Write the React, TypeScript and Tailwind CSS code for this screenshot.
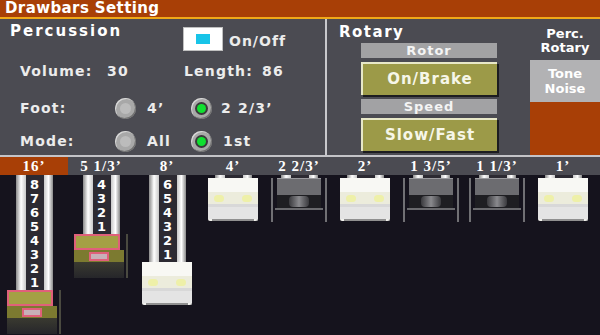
import React from "react";

// ─── Drawbar data ─────────────────────────────────────────────────────────────
type Kind = "brown" | "white" | "black";

const BARS: { label: string; level: number; kind: Kind }[] = [
  { label: "16’", level: 8, kind: "brown" },
  { label: "5 1/3’", level: 4, kind: "brown" },
  { label: "8’", level: 6, kind: "white" },
  { label: "4’", level: 0, kind: "white" },
  { label: "2 2/3’", level: 0, kind: "black" },
  { label: "2’", level: 0, kind: "white" },
  { label: "1 3/5’", level: 0, kind: "black" },
  { label: "1 1/3’", level: 0, kind: "black" },
  { label: "1’", level: 0, kind: "white" },
];

const UI = "font-['DejaVu_Sans',sans-serif] font-bold";

// ─── Small pieces ─────────────────────────────────────────────────────────────

function Radio({ on }: { on?: boolean }) {
  return (
    <div className="flex h-[21px] w-[21px] items-center justify-center rounded-full bg-[#a8a8a8] shadow-[inset_-1px_-1px_0_#707070,inset_1px_1px_0_#d8d8d8]">
      {on ? (
        <div className="flex h-[13px] w-[13px] items-center justify-center rounded-full bg-[#3a3a3a]">
          <div className="h-[9px] w-[9px] rounded-full bg-[#10e030]" />
        </div>
      ) : (
        <div className="h-[11px] w-[11px] rounded-full bg-[#bcbcbc]" />
      )}
    </div>
  );
}

function Knob({ kind }: { kind: Kind }) {
  if (kind === "white") {
    return (
      <div className="flex w-[50px] flex-col rounded-[2px] bg-[#f2f2ee] shadow-[inset_-1px_0_0_#b8b8b8]">
        <div className="h-[14px] bg-[#f8f8f4]" />
        <div className="flex h-[12px] items-center justify-between bg-[#ececdc] px-[6px]">
          <div className="h-[7px] w-[10px] rounded-sm bg-[#eef0a8]" />
          <div className="h-[7px] w-[10px] rounded-sm bg-[#eef0a8]" />
        </div>
        <div className="h-[3px] bg-[#d8d8d8]" />
        <div className="h-[12px] bg-[#e4e4e4]" />
        <div className="mx-[4px] h-[2px] bg-[#909090]" />
      </div>
    );
  }
  if (kind === "black") {
    return (
      <div className="flex w-[56px] flex-col items-center border-x-2 border-[#707074] pb-[12px]">
        <div className="h-[17px] w-[44px] bg-[#6c6c70] shadow-[inset_0_1px_0_#9a9a9e]" />
        <div className="flex h-[13px] w-[44px] items-center justify-center bg-[#1e1e22]">
          <div className="h-[11px] w-[20px] rounded-sm bg-gradient-to-r from-[#3a3a3e] via-[#8a8a8e] to-[#3a3a3e]" />
        </div>
        <div className="h-[2px] w-[48px] bg-[#6a6a6e]" />
      </div>
    );
  }
  return (
    <div className="flex w-[54px] flex-col items-start border-r-2 border-[#4a4a40]">
      <div className="h-[16px] w-[46px] border-2 border-[#e0607a] bg-[#a4a044]" />
      <div className="flex h-[12px] w-[50px] items-center justify-center bg-[#7c7a30]">
        <div className="h-[9px] w-[20px] border-2 border-[#e0607a] bg-[#c8b0b8]" />
      </div>
      <div className="h-[16px] w-[50px] bg-gradient-to-b from-[#3a3a30] to-[#26262a]" />
    </div>
  );
}

function Drawbar({ level, kind }: { level: number; kind: Kind }) {
  const nums = Array.from({ length: level }, (_, i) => level - i);
  return (
    <div className="flex flex-col items-center">
      <div className="flex">
        <div className="w-[10px] bg-gradient-to-r from-[#8a8a8a] via-[#ffffff] to-[#c8c8c8]" />
        <div className="flex w-[18px] flex-col bg-[#2c2a32] pt-[3px]">
          {nums.map((n) => (
            <div
              key={n}
              className={`${UI} h-[14px] text-center text-[13px] leading-[14px] text-white`}
            >
              {n}
            </div>
          ))}
        </div>
        <div className="w-[9px] bg-gradient-to-r from-[#c8c8c8] via-[#ffffff] to-[#8a8a8a]" />
      </div>
      <Knob kind={kind} />
    </div>
  );
}

// ─── Page ─────────────────────────────────────────────────────────────────────

export default function App() {
  return (
    <div className="flex h-[335px] w-[600px] flex-col overflow-hidden bg-[#15131d]">
      {/* Title bar */}
      <div
        className={`${UI} h-[17px] bg-[#a83f06] pl-[5px] text-[15px] leading-[17px] tracking-[0.4px] text-white`}
      >
        Drawbars Setting
      </div>
      <div className="h-[2px] bg-[#f0a818]" />

      {/* Settings panel */}
      <div className="flex h-[136px] bg-[#4b4b52]">
        {/* Percussion */}
        <div className={`${UI} flex w-[325px] flex-col text-[14px] text-[#ececec]`}>
          <div className="flex items-start pt-[5px]">
            <div className="ml-[10px] w-[173px] text-[15px] leading-[14px] tracking-[2px] text-white">
              Percussion
            </div>
            <div className="mt-[3px] flex h-[24px] w-[40px] items-center justify-center border border-[#c0c0c0] bg-white">
              <div className="h-[10px] w-[14px] bg-[#18c4e8]" />
            </div>
            <div className="ml-[6px] mt-[7px] tracking-[1px]">On/Off</div>
          </div>

          <div className="mt-[9px] flex items-center tracking-[1.2px]">
            <div className="ml-[20px] w-[87px]">Volume:</div>
            <div className="w-[77px]">30</div>
            <div className="w-[78px]">Length:</div>
            <div>86</div>
          </div>

          <div className="mt-[16px] flex items-center tracking-[1.2px]">
            <div className="ml-[20px] w-[95px]">Foot:</div>
            <Radio />
            <div className="ml-[11px] w-[44px]">4’</div>
            <Radio on />
            <div className="ml-[9px]">2 2/3’</div>
          </div>

          <div className="mt-[12px] flex items-center tracking-[1.2px]">
            <div className="ml-[20px] w-[95px]">Mode:</div>
            <Radio />
            <div className="ml-[11px] w-[44px]">All</div>
            <Radio on />
            <div className="ml-[11px]">1st</div>
          </div>
        </div>

        <div className="w-[2px] bg-[#c8c8cc]" />

        {/* Rotary */}
        <div className="flex flex-1">
          <div className={`${UI} flex w-[203px] flex-col`}>
            <div className="ml-[12px] mt-[6px] text-[15px] leading-[14px] tracking-[1.5px] text-white">
              Rotary
            </div>
            <div className="ml-[34px] mt-[4px] flex w-[136px] flex-col gap-[4px]">
              <div className="h-[15px] bg-[#a2a2a4] text-center text-[13px] leading-[15px] tracking-[1px] text-[#f4f4f4]">
                Rotor
              </div>
              <div className="flex h-[33px] items-center justify-center border-t-2 border-l-2 border-[#e8e8c8] bg-[#9c9a48] text-[15px] tracking-[1px] text-[#f6f6e8] shadow-[2px_2px_0_#1c1c20]">
                On/Brake
              </div>
              <div className="h-[15px] bg-[#a2a2a4] text-center text-[13px] leading-[15px] tracking-[1px] text-[#f4f4f4]">
                Speed
              </div>
              <div className="flex h-[33px] items-center justify-center border-t-2 border-l-2 border-[#e8e8c8] bg-[#9c9a48] text-[15px] tracking-[1px] text-[#f6f6e8] shadow-[2px_2px_0_#1c1c20]">
                Slow/Fast
              </div>
            </div>
          </div>
          <div className={`${UI} flex flex-1 flex-col`}>
            <div className="mt-[8px] h-[33px] text-center text-[13px] leading-[14px] text-white">
              Perc.
              <br />
              Rotary
            </div>
            <div className="flex flex-1 flex-col bg-[#a83f06]">
              <div className="flex h-[42px] flex-col items-center justify-center bg-[#b2b2b4] text-[13px] leading-[15px] text-white">
                <span>Tone</span>
                <span>Noise</span>
              </div>
            </div>
          </div>
        </div>
      </div>

      <div className="h-[2px] bg-[#c4c4c8]" />

      {/* Footage labels */}
      <div className="grid h-[18px] grid-cols-[68px_repeat(8,66px)] bg-[#4b4b52] font-['Liberation_Serif',serif] text-[15px] font-bold leading-[18px] tracking-[1px] text-white">
        {BARS.map((b, i) => (
          <div key={b.label} className={`text-center ${i === 0 ? "bg-[#a83f06]" : ""}`}>
            {b.label}
          </div>
        ))}
      </div>

      {/* Drawbars */}
      <div className="grid flex-1 grid-cols-[68px_repeat(8,66px)] items-start">
        {BARS.map((b) => (
          <Drawbar key={b.label} level={b.level} kind={b.kind} />
        ))}
      </div>
    </div>
  );
}
